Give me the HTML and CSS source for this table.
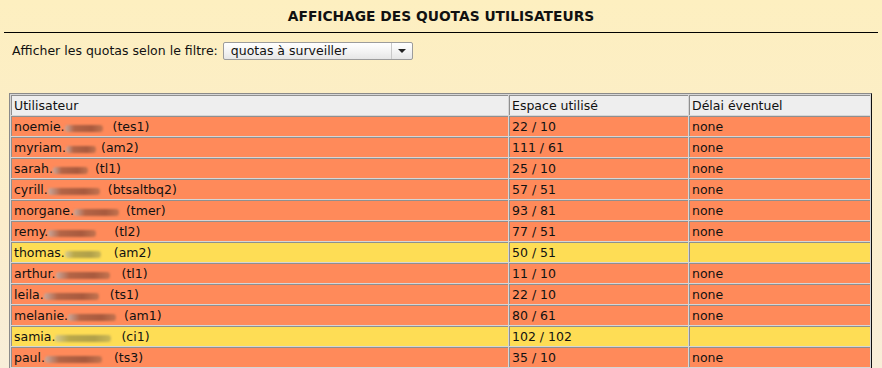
FILE: index.html
```html
<!DOCTYPE html>
<html lang="fr">
<head>
<meta charset="utf-8">
<title>Affichage des quotas utilisateurs</title>
<link rel="stylesheet" href="styles.css">
</head>
<body>
<div class="page">
  <h1 class="title">AFFICHAGE DES QUOTAS UTILISATEURS</h1>
  <div class="filter">
    <span class="filter-label">Afficher les quotas selon le filtre:</span>
    <span class="select">
      <span class="select-value">quotas à surveiller</span>
      <span class="select-arrow"><span class="tri"></span></span>
    </span>
  </div>
  <table class="quotas">
    <tr class="head"><td class="c1">Utilisateur</td><td class="c2">Espace utilisé</td><td class="c3">Délai éventuel</td></tr>
    <tr class="over"><td>noemie.<span class="blur w38"></span><span class="grp g10">(tes1)</span></td><td>22 / 10</td><td>none</td></tr>
    <tr class="over"><td>myriam.<span class="blur w30"></span><span class="grp g5">(am2)</span></td><td>111 / 61</td><td>none</td></tr>
    <tr class="over"><td>sarah.<span class="blur w35"></span><span class="grp g7">(tl1)</span></td><td>25 / 10</td><td>none</td></tr>
    <tr class="over"><td>cyrill.<span class="blur w52"></span><span class="grp g8">(btsaltbq2)</span></td><td>57 / 51</td><td>none</td></tr>
    <tr class="over"><td>morgane.<span class="blur w45"></span><span class="grp g7">(tmer)</span></td><td>93 / 81</td><td>none</td></tr>
    <tr class="over"><td>remy.<span class="blur w48"></span><span class="grp g18">(tl2)</span></td><td>77 / 51</td><td>none</td></tr>
    <tr class="warn"><td>thomas.<span class="blur w36"></span><span class="grp g13">(am2)</span></td><td>50 / 51</td><td></td></tr>
    <tr class="over"><td>arthur.<span class="blur w54"></span><span class="grp g12">(tl1)</span></td><td>11 / 10</td><td>none</td></tr>
    <tr class="over"><td>leila.<span class="blur w55"></span><span class="grp g11">(ts1)</span></td><td>22 / 10</td><td>none</td></tr>
    <tr class="over"><td>melanie.<span class="blur w48"></span><span class="grp g8">(am1)</span></td><td>80 / 61</td><td>none</td></tr>
    <tr class="warn"><td>samia.<span class="blur w56"></span><span class="grp g10">(ci1)</span></td><td>102 / 102</td><td></td></tr>
    <tr class="over"><td>paul.<span class="blur w57"></span><span class="grp g12">(ts3)</span></td><td>35 / 10</td><td>none</td></tr>
  </table>
</div>
</body>
</html>
```

FILE: styles.css
```css
html, body {
  margin: 0;
  padding: 0;
}

body {
  background: linear-gradient(to bottom, #fdefc0 0%, #fbedcb 60%, #f8eed9 100%);
  min-height: 368px;
  font-family: "DejaVu Sans", Verdana, sans-serif;
  font-size: 12.5px;
  color: #111;
}

.page {
  padding: 0 4px;
}

.title {
  margin: 0;
  padding: 9px 0 8px;
  font-size: 13.8px;
  line-height: 15px;
  font-weight: bold;
  text-align: center;
  border-bottom: 1px solid #000;
  color: #111;
}

.filter {
  display: flex;
  align-items: center;
  gap: 5px;
  padding: 8px 0 0 8px;
  height: 19px;
}

.filter-label {
  line-height: 15px;
}

.select {
  display: flex;
  width: 190px;
  height: 18px;
  box-sizing: border-box;
  border: 1px solid #9c9c9c;
  border-radius: 2px;
  background: linear-gradient(to bottom, #ffffff 0%, #f4f4f4 50%, #e6e6e6 100%);
}

.select-value {
  flex: 1;
  padding-left: 7px;
  line-height: 16px;
  border-right: 1px solid #c9c9c9;
}

.select-arrow {
  width: 20px;
  display: flex;
  align-items: center;
  justify-content: center;
}

.tri {
  width: 0;
  height: 0;
  border-left: 4px solid transparent;
  border-right: 4px solid transparent;
  border-top: 4px solid #222;
}

.quotas {
  margin: 33px 0 0 5px;
  width: 863px;
  border-collapse: separate;
  border-spacing: 1px;
  background: #d6d6d6;
  border: 1px solid;
  border-color: #8a8a8a #111 #111 #8a8a8a;
}

.quotas td {
  padding: 2px 2px 2px 2px;
  height: 15px;
  line-height: 15px;
  border-top: 1px solid #8f8f8f;
  border-left: 1px solid #8f8f8f;
  white-space: nowrap;
  color: #111;
}

.head td {
  background: #eeeeee;
}

.over td {
  background: #ff8a5a;
}

.warn td {
  background: #fedd55;
}

.c1 { width: 492px; }
.c2 { width: 174px; }

.blur {
  display: inline-block;
  height: 7px;
  vertical-align: -1px;
  border-radius: 3px;
  filter: blur(1.2px);
}

.over .blur {
  background: linear-gradient(to right, #c9a89c 0%, #b36446 25%, #a85a3e 70%, #c47450 100%);
}

.warn .blur {
  background: linear-gradient(to right, #d6ca90 0%, #b9a84a 25%, #b0a04a 70%, #cbb856 100%);
}

.w30 { width: 30px; }
.w35 { width: 35px; }
.w36 { width: 36px; }
.w38 { width: 38px; }
.w45 { width: 45px; }
.w48 { width: 48px; }
.w52 { width: 52px; }
.w54 { width: 54px; }
.w55 { width: 55px; }
.w56 { width: 56px; }
.w57 { width: 57px; }

.g5 { margin-left: 5px; }
.g7 { margin-left: 7px; }
.g8 { margin-left: 8px; }
.g10 { margin-left: 10px; }
.g11 { margin-left: 11px; }
.g12 { margin-left: 12px; }
.g13 { margin-left: 13px; }
.g18 { margin-left: 18px; }
```
